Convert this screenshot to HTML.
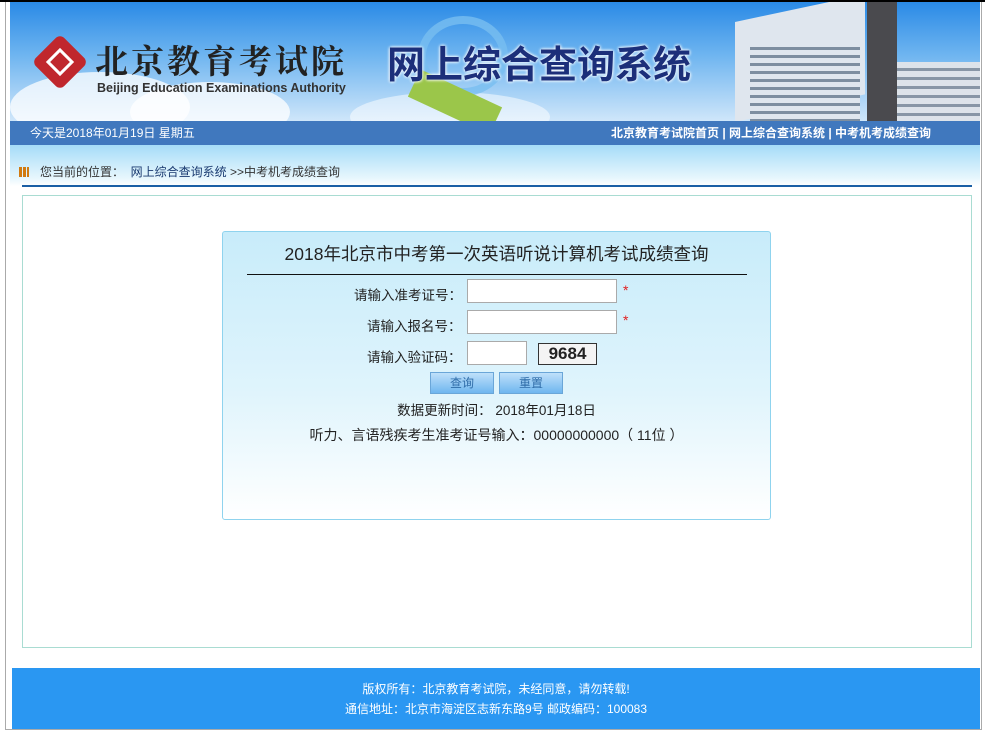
<!DOCTYPE html>
<html><head><meta charset="utf-8"><style>
*{margin:0;padding:0;box-sizing:border-box}
body{width:985px;height:732px;background:#fff;font-family:"Liberation Sans","Noto Sans CJK SC",sans-serif;font-size:12px;position:relative;overflow:hidden}
.top{position:absolute;left:0;top:0;width:985px;height:2px;background:#000}
.frame{position:absolute;left:5px;top:2px;width:977px;height:728px;border-left:1px solid #aaa;border-right:1px solid #aaa;border-bottom:1px solid #aaa}
.hdr{position:absolute;left:10px;top:2px;width:970px;height:119px;background:linear-gradient(#2a8ae6 0%,#6fb5f0 45%,#cfe6fa 100%);overflow:hidden}
.cloud{position:absolute;border-radius:50%;background:rgba(255,255,255,.75)}
.nav{position:absolute;left:10px;top:121px;width:970px;height:24px;background:#4078be;color:#fff;font-size:12px;line-height:24px}
.loc{position:absolute;left:10px;top:145px;width:970px;height:41px;background:linear-gradient(#a5dcf8,#e6f6fd 80%,#fff)}
.bl{position:absolute;left:22px;top:185px;width:950px;height:2px;background:#1a5fa5}
.box{position:absolute;left:22px;top:195px;width:950px;height:453px;border:1px solid #a9dcd2}
.card{position:absolute;left:222px;top:231px;width:549px;height:289px;border:1px solid #8fd3ee;border-radius:3px;background:linear-gradient(#c8ecfa 0%,#dff4fc 55%,#fff 100%)}
.foot{position:absolute;left:12px;top:668px;width:968px;height:61px;background:#2a97f2;color:#fff;text-align:center;font-size:12px;line-height:20px;padding-top:11px}
input{position:absolute;background:#fff;border:1px solid #aaa}
.btn{position:absolute;width:64px;height:22px;border:1px solid #6aa6d8;background:linear-gradient(#bfe0fa,#6fb6ef);color:#2f6ca8;text-align:center;line-height:20px;font-size:12px}
.t{position:absolute;white-space:nowrap;color:#222}
</style></head><body>
<div class="top"></div><div class="frame"></div>
<div class="hdr">
 <div class="cloud" style="left:0;top:70px;width:180px;height:70px"></div>
 <div class="cloud" style="left:120px;top:80px;width:160px;height:60px"></div>
 <div class="cloud" style="left:340px;top:90px;width:200px;height:50px;background:rgba(255,255,255,.5)"></div>
 <div style="position:absolute;left:30px;top:40px;width:40px;height:40px;background:#c0272d;transform:rotate(45deg);border-radius:6px"></div>
 <div style="position:absolute;left:40px;top:50px;width:20px;height:20px;border:3px solid #fff;transform:rotate(45deg)"></div>
 <div style="position:absolute;left:85px;top:38px;font-family:'Noto Serif CJK SC',serif;font-size:33px;font-weight:bold;color:#222;letter-spacing:3px;line-height:40px">北京教育考试院</div>
 <div style="position:absolute;left:87px;top:78px;font-size:12.5px;font-weight:bold;color:#333;line-height:16px">Beijing Education Examinations Authority</div>
 <div style="position:absolute;left:408px;top:14px;width:90px;height:80px;border:8px solid rgba(120,190,240,.8);border-radius:50%"></div>
 <div style="position:absolute;left:400px;top:85px;width:90px;height:30px;background:#9bc64a;transform:rotate(25deg)"></div>
 <div style="position:absolute;left:377px;top:42px;font-size:38px;color:#1c2f7a;line-height:44px;font-weight:bold;text-shadow:0 0 3px #fff,0 0 3px #fff">网上综合查询系统</div>
 <div style="position:absolute;left:725px;top:20px;width:130px;height:100px;background:#dfe6ee;transform:skewY(-12deg);transform-origin:left bottom"></div>
 <div style="position:absolute;left:740px;top:40px;width:110px;height:80px;background:repeating-linear-gradient(#dfe6ee 0 5px,#7d8ea0 5px 8px)"></div>
 <div style="position:absolute;left:857px;top:0;width:30px;height:120px;background:#4a4a4e"></div>
 <div style="position:absolute;left:887px;top:60px;width:83px;height:60px;background:repeating-linear-gradient(#dde3ea 0 6px,#8896a6 6px 9px)"></div>
</div>
<div class="nav"><span style="position:absolute;left:20px">今天是2018年01月19日 星期五</span><span style="position:absolute;left:601px;font-weight:bold">北京教育考试院首页 | 网上综合查询系统 | 中考机考成绩查询</span></div>
<div class="loc">
 <div style="position:absolute;left:9px;top:22px;width:10px;height:10px;background:repeating-linear-gradient(90deg,#d17a10 0 3px,transparent 3px 4px)"></div>
 <span class="t" style="left:30px;top:18px;color:#333">您当前的位置：&nbsp; <span style="color:#1a3a70">网上综合查询系统</span> &gt;&gt;中考机考成绩查询</span>
</div>
<div class="bl"></div>
<div class="box"></div>
<div class="card">
 <div class="t" style="left:0;width:547px;text-align:center;top:9px;font-size:17.5px;color:#222">2018年北京市中考第一次英语听说计算机考试成绩查询</div>
 <div style="position:absolute;left:24px;top:42px;width:500px;height:1px;background:#111"></div>
 <div class="t" style="left:131px;top:52px;font-size:13.5px">请输入准考证号：</div>
 <input style="left:244px;top:47px;width:150px;height:24px">
 <span class="t" style="left:400px;top:50px;color:#e02020;font-size:14px">*</span>
 <div class="t" style="left:144px;top:83px;font-size:13.5px">请输入报名号：</div>
 <input style="left:244px;top:78px;width:150px;height:24px">
 <span class="t" style="left:400px;top:80px;color:#e02020;font-size:14px">*</span>
 <div class="t" style="left:144px;top:114px;font-size:13.5px">请输入验证码：</div>
 <input style="left:244px;top:109px;width:60px;height:24px">
 <div style="position:absolute;left:315px;top:111px;width:59px;height:22px;border:1px solid #333;background:#f4f4f4;font-weight:bold;font-size:17px;line-height:20px;text-align:center;color:#222">9684</div>
 <div class="btn" style="left:207px;top:140px">查询</div>
 <div class="btn" style="left:276px;top:140px">重置</div>
 <div class="t" style="left:0;width:547px;text-align:center;top:167px;font-size:13.5px">数据更新时间： 2018年01月18日</div>
 <div class="t" style="left:0;width:547px;text-align:center;top:193px;font-size:14px">听力、言语残疾考生准考证号输入：00000000000（ 11位 ）</div>
</div>
<div class="foot">版权所有：北京教育考试院，未经同意，请勿转载!<br>通信地址：北京市海淀区志新东路9号 邮政编码：100083</div>
</body></html>
